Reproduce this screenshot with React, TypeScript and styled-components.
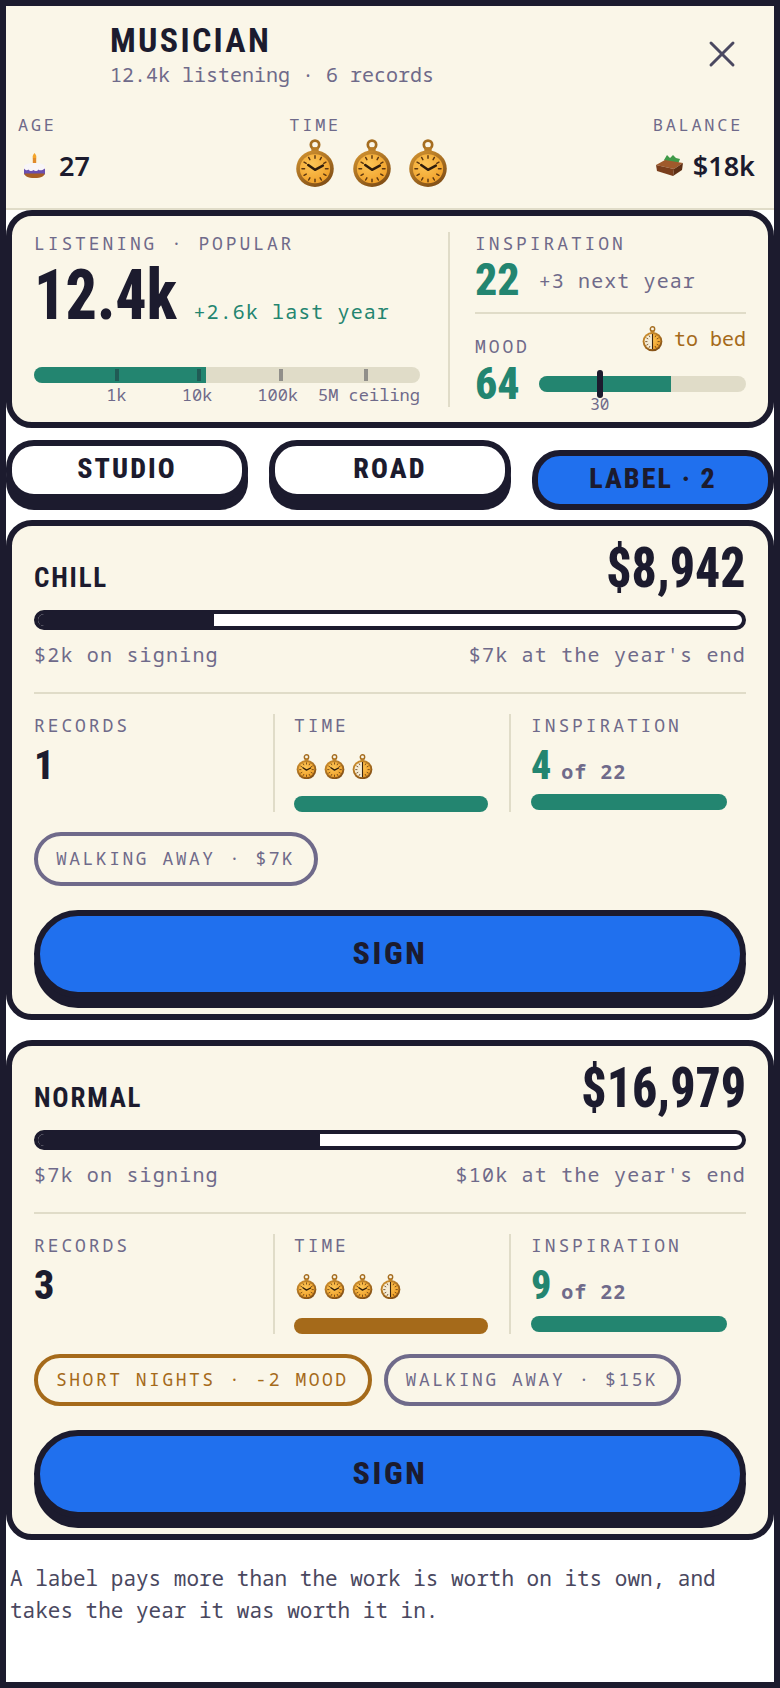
import styled, { createGlobalStyle } from 'styled-components';
import { X } from 'lucide-react';

const DARK = '#1c1b2e';
const CREAM = '#faf6e8';
const GREEN = '#238570';
const MUTED = '#6f6a8a';
const LINE = '#e0dcc8';
const AMBER = '#a56a1a';
const BLUE = '#2070ee';

const GlobalStyle = createGlobalStyle`
  html, body { margin: 0; padding: 0; background: #fff; }
  * { box-sizing: border-box; }
`;

const mono = `"Noto Sans Mono", "DejaVu Sans Mono", monospace`;
const cond = `Roboto, "Liberation Sans", sans-serif`;

const Frame = styled.div`
  width: 780px;
  height: 1688px;
  border: 6px solid ${DARK};
  background: #fff;
  display: flex;
  flex-direction: column;
  font-family: ${mono};
  color: ${DARK};
  overflow: hidden;
`;

const Header = styled.header`
  background: ${CREAM};
  height: 204px;
  flex: none;
  border-bottom: 2px solid ${LINE};
  padding: 14px 12px 0;
  display: flex;
  flex-direction: column;
`;

const TitleRow = styled.div`
  display: flex;
  justify-content: space-between;
  align-items: center;
  padding: 0 18px 0 92px;
`;

const TitleBlock = styled.div`
  display: flex;
  flex-direction: column;
  gap: 2px;
`;

const Title = styled.h1`
  margin: 0;
  font-family: ${cond};
  font-stretch: 75%;
  font-size: 34px;
  line-height: 40px;
  font-weight: 700;
  letter-spacing: 2.3px;
`;

const Sub = styled.div`
  font-size: 20px;
  line-height: 26px;
  color: ${MUTED};
`;

const CloseIcon = styled(X)`
  color: #4a4860;
  flex: none;
`;

const StatRow = styled.div`
  display: flex;
  justify-content: space-between;
  margin-top: 26px;
  padding-right: 7px;
`;

const Stat = styled.div`
  display: flex;
  flex-direction: column;
`;

const TimeStat = styled(Stat)`
  padding-right: 5px;
`;

const Label = styled.div<{ $small?: boolean }>`
  font-size: ${({ $small }) => ($small ? 17 : 18)}px;
  line-height: 22px;
  letter-spacing: ${({ $small }) => ($small ? 2.7 : 2.9)}px;
  color: ${MUTED};
`;

const StatValue = styled.div<{ $gap: number; $inset: number }>`
  display: flex;
  align-items: center;
  gap: ${({ $gap }) => $gap}px;
  padding-left: ${({ $inset }) => $inset}px;
  height: 48px;
  margin-top: 5px;
  font-family: "Noto Sans", sans-serif;
  font-weight: 600;
  font-size: 27px;
`;

const Panel = styled.section`
  flex: none;
  height: 218px;
  margin-top: 0;
  border: 6px solid ${DARK};
  border-radius: 26px;
  background: ${CREAM};
  padding: 16px 22px;
  display: grid;
  grid-template-columns: 416px 1fr;
`;

const ListenCol = styled.div`
  display: flex;
  flex-direction: column;
  border-right: 2px solid ${LINE};
  padding-right: 28px;
`;

const ListenRow = styled.div`
  display: flex;
  align-items: baseline;
  margin-top: 5px;
`;

const BigNumber = styled.div`
  font-family: ${cond};
  font-stretch: 75%;
  font-weight: 800;
  font-size: 70px;
  line-height: 72px;
  margin-right: -2px;
  transform: scaleX(0.885);
  transform-origin: left;
`;

const Delta = styled.div<{ $muted?: boolean }>`
  font-size: 20px;
  letter-spacing: 1.1px;
  color: ${({ $muted }) => ($muted ? MUTED : GREEN)};
`;

const Track = styled.div`
  position: relative;
  height: 16px;
  border-radius: 8px;
  background: ${LINE};
  overflow: hidden;
  flex: 1;
`;

const ListenTrack = styled(Track)`
  flex: none;
  margin-top: auto;
`;

const TrackFill = styled.div`
  height: 100%;
  background: ${GREEN};
`;

const Tick = styled.span`
  position: absolute;
  top: 2px;
  width: 4px;
  height: 12px;
  background: rgba(28, 27, 46, 0.4);
`;

const TickLabels = styled.div`
  display: flex;
  height: 24px;
  padding: 1px 0 0 42px;
  font-size: 17px;
  line-height: 22px;
  color: ${MUTED};
`;

const TickLabel = styled.span`
  width: 82px;
  text-align: center;
`;

const TickEnd = styled.span`
  flex: 1;
  text-align: right;
  white-space: nowrap;
`;

const VitalCol = styled.div`
  display: flex;
  flex-direction: column;
  padding: 0 0 0 25px;
`;

const InspirationBlock = styled.div`
  height: 82px;
  border-bottom: 2px solid ${LINE};
  display: flex;
  flex-direction: column;
  margin-bottom: 17px;
`;

const VitalRow = styled.div`
  display: flex;
  align-items: center;
  gap: 19px;
  margin-top: 3px;
`;

const VitalNumber = styled.div`
  font-family: ${cond};
  font-stretch: 75%;
  font-weight: 800;
  font-size: 44px;
  line-height: 46px;
  color: ${GREEN};
`;

const MoodHead = styled.div`
  display: flex;
  justify-content: space-between;
  align-items: flex-end;
  height: 26px;
`;

const ToBed = styled.div`
  display: flex;
  align-items: center;
  gap: 11px;
  font-size: 20px;
  line-height: 26px;
  color: ${AMBER};
  margin-bottom: 5px;
`;

const MoodRow = styled.div`
  display: flex;
  align-items: center;
  gap: 19px;
  margin-top: 4px;
`;

const MoodTrackWrap = styled.div`
  position: relative;
  flex: 1;
  display: flex;
`;

const MoodMarker = styled.span`
  position: absolute;
  top: -6px;
  width: 6px;
  height: 28px;
  margin-left: -3px;
  border-radius: 3px;
  background: ${DARK};
`;

const MoodMarkerLabel = styled.span`
  position: absolute;
  top: 18px;
  transform: translateX(-50%);
  font-size: 16px;
  line-height: 20px;
  color: ${MUTED};
`;

const Tabs = styled.nav`
  flex: none;
  display: grid;
  grid-template-columns: repeat(3, 242px);
  justify-content: space-between;
  margin-top: 12px;
  margin-bottom: 20px;
`;

const Tab = styled.div<{ $active?: boolean }>`
  height: 60px;
  border: 6px solid ${DARK};
  border-radius: 28px;
  display: flex;
  align-items: center;
  justify-content: center;
  padding-bottom: 4px;
  font-family: ${cond};
  font-stretch: 75%;
  font-weight: 800;
  font-size: 28px;
  letter-spacing: 2.1px;
  background: ${({ $active }) => ($active ? BLUE : '#fff')};
  box-shadow: ${({ $active }) => ($active ? 'none' : `0 10px 0 ${DARK}`)};
  transform: ${({ $active }) => ($active ? 'translateY(10px)' : 'none')};
`;

const Card = styled.section`
  flex: none;
  height: 500px;
  border: 6px solid ${DARK};
  border-radius: 26px;
  background: ${CREAM};
  padding: 12px 22px 0;
  display: flex;
  flex-direction: column;
  & + & {
    margin-top: 20px;
  }
`;

const CardHead = styled.div`
  display: flex;
  justify-content: space-between;
  align-items: baseline;
  height: 60px;
`;

const CardName = styled.div`
  font-family: ${cond};
  font-stretch: 75%;
  font-weight: 700;
  font-size: 27px;
  letter-spacing: 1.8px;
`;

const Price = styled.div`
  font-family: ${cond};
  font-stretch: 75%;
  font-weight: 800;
  font-size: 56px;
  line-height: 60px;
  transform: scaleX(0.89);
  transform-origin: right;
`;

const Split = styled.div`
  height: 20px;
  margin-top: 12px;
  border: 4px solid ${DARK};
  border-radius: 10px;
  background: #fff;
  overflow: hidden;
  flex: none;
`;

const SplitFill = styled.div`
  height: 100%;
  background: ${DARK};
`;

const SplitLabels = styled.div`
  display: flex;
  justify-content: space-between;
  margin-top: 12px;
  font-size: 20px;
  line-height: 26px;
  letter-spacing: 1.2px;
  color: ${MUTED};
`;

const Rule = styled.div`
  height: 2px;
  margin-top: 24px;
  background: ${LINE};
  flex: none;
`;

const Numbers = styled.div<{ $height: number }>`
  display: grid;
  grid-template-columns: 239px 236px 1fr;
  height: ${({ $height }) => $height}px;
  margin-top: 20px;
  flex: none;
`;

const NumberCol = styled.div<{ $first?: boolean; $lift?: number }>`
  display: flex;
  flex-direction: column;
  border-left: ${({ $first }) => ($first ? 'none' : `2px solid ${LINE}`)};
  padding: 0 21px ${({ $lift }) => $lift ?? 0}px ${({ $first }) => ($first ? 0 : 19)}px;
`;

const InspirationCol = styled(NumberCol)`
  padding-left: 20px;
  padding-right: 19px;
`;

const NumberValue = styled.div`
  display: flex;
  align-items: baseline;
  gap: 10px;
  margin-top: 8px;
  font-family: ${cond};
  font-stretch: 75%;
  font-weight: 800;
  font-size: 40px;
  line-height: 44px;
`;

const GreenDigit = styled.span`
  color: ${GREEN};
`;

const OfTotal = styled.span`
  font-family: ${mono};
  font-stretch: 100%;
  font-size: 20px;
  font-weight: 700;
  letter-spacing: 1px;
  color: ${MUTED};
`;

const WatchRow = styled.div<{ $gap: number; $inset: number }>`
  display: flex;
  align-items: center;
  gap: ${({ $gap }) => $gap}px;
  padding-left: ${({ $inset }) => $inset}px;
`;

const HeaderWatches = styled(WatchRow)`
  margin-top: 3px;
`;

const CardWatches = styled(WatchRow)`
  margin-top: 18px;
`;

const Meter = styled.div<{ $color: string }>`
  height: 16px;
  margin-top: auto;
  border-radius: 8px;
  background: ${({ $color }) => $color};
  flex: none;
`;

const Pills = styled.div`
  display: flex;
  gap: 12px;
  margin-top: 20px;
  flex: none;
`;

const Pill = styled.div<{ $color: string; $height: number }>`
  height: ${({ $height }) => $height}px;
  display: flex;
  align-items: center;
  padding: 0 19px 3px 18px;
  border: 4px solid ${({ $color }) => $color};
  border-radius: 27px;
  color: ${({ $color }) => $color};
  font-size: 18px;
  letter-spacing: 2.5px;
  white-space: nowrap;
`;

const SignButton = styled.button`
  display: block;
  flex: none;
  width: 100%;
  height: 88px;
  margin-top: 24px;
  border: 6px solid ${DARK};
  border-radius: 44px;
  background: ${BLUE};
  box-shadow: 0 10px 0 ${DARK};
  padding: 0 0 3px;
  color: ${DARK};
  font-family: ${cond};
  font-stretch: 75%;
  font-weight: 800;
  font-size: 32px;
  letter-spacing: 2.6px;
`;

const Note = styled.p`
  margin: 0;
  padding: 22px 4px 0;
  font-size: 21px;
  line-height: 32px;
  color: #4a4860;
`;

const WatchIcon = ({ size, half }: { size: number; half?: boolean }) => (
  <svg width={size} height={size * 1.2} viewBox="0 0 38 46" fill="none">
    <defs>
      <linearGradient id="watchCase" x1="0.2" y1="0" x2="0.8" y2="1">
        <stop offset="0" stopColor="#d0912f" />
        <stop offset="1" stopColor="#7c4a14" />
      </linearGradient>
      <radialGradient id="watchFace" cx="0.4" cy="0.35" r="0.8">
        <stop offset="0" stopColor="#fcc556" />
        <stop offset="1" stopColor="#ee9a22" />
      </radialGradient>
    </defs>
    <circle cx="19" cy="5.5" r="4" stroke="#a56d20" strokeWidth="2.6" />
    <rect x="15.5" y="8" width="7" height="4.5" rx="1" fill="#b87c26" />
    <ellipse cx="19" cy="28.5" rx="18" ry="17.5" fill="url(#watchCase)" />
    <ellipse cx="19" cy="28.5" rx="14.5" ry="14" fill="url(#watchFace)" />
    {half && <path d="M19 14.5a14.5 14 0 0 0 0 28z" fill="#f5ecd6" />}
    <g stroke="#5a3510" strokeWidth="1.4" strokeLinecap="round">
      <path d="M19 16v2.5M19 38.5v2.5M6.5 28.5h2.5M29 28.5h2.5M12.9 17.7l1.2 2.1M25.1 17.7l-1.2 2.1M8.5 22.2l2.1 1.2M29.5 22.2l-2.1 1.2M8.5 34.8l2.1-1.2M29.5 34.8l-2.1-1.2M12.9 39.3l1.2-2.1M25.1 39.3l-1.2-2.1" />
    </g>
    {half ? (
      <path d="M19 14.5v28" stroke="#3a2410" strokeWidth="2" />
    ) : (
      <path d="M12.5 25L19 29.5L26.5 25.5" stroke="#2f1d0c" strokeWidth="2.4" strokeLinecap="round" strokeLinejoin="round" />
    )}
  </svg>
);

const CakeIcon = () => (
  <svg width="21" height="25" viewBox="0 0 21 25">
    <path d="M10.5 0c1.8 2.2 2.2 3.6 1.6 5.5H8.9c-.6-1.9-.2-3.3 1.6-5.5z" fill="#f4a52a" />
    <rect x="8.8" y="5" width="3.4" height="6.5" fill="#e08a2c" />
    <path d="M0 14c0-2.8 4.7-4 10.5-4S21 11.2 21 14v7H0z" fill="#f8f5f8" />
    <path d="M0 15.5c1.5 1.8 3 2.4 4.5 1 1.5 2 3.5 2 5 .5 1.5 1.5 3.5 1.5 5-.5 1.5 1.500 3.5 1 6.5-1v6H0z" fill="#6a4fb0" />
    <path d="M.5 20.5h20c0 2.7-3 4.5-10 4.5s-10-1.8-10-4.5z" fill="#a85f25" />
  </svg>
);

const WalletIcon = () => (
  <svg width="27" height="22" viewBox="0 0 27 22">
    <path d="M8 6L11 1l3 3 3-3 3 3 4 1-2 5-12-2z" fill="#3f9a48" />
    <path d="M0 11l9-5 18 3-9 6z" fill="#9f5a2c" />
    <path d="M0 11l18 4-1 7-16-5z" fill="#7a3e1c" />
    <path d="M18 15l9-6-1 7-9 6z" fill="#5e2f14" />
  </svg>
);

interface Pact {
  name: string;
  price: string;
  share: number;
  signing: string;
  yearEnd: string;
  records: number;
  watches: number;
  timeColor: string;
  inspiration: number;
  numbersHeight: number;
  pillHeight: number;
  pills: { text: string; color: string }[];
}

const pacts: Pact[] = [
  {
    name: 'CHILL',
    price: '$8,942',
    share: 25,
    signing: '$2k on signing',
    yearEnd: "$7k at the year's end",
    records: 1,
    watches: 2,
    timeColor: GREEN,
    inspiration: 4,
    numbersHeight: 98,
    pillHeight: 54,
    pills: [{ text: 'WALKING AWAY · $7K', color: MUTED }],
  },
  {
    name: 'NORMAL',
    price: '$16,979',
    share: 40,
    signing: '$7k on signing',
    yearEnd: "$10k at the year's end",
    records: 3,
    watches: 3,
    timeColor: AMBER,
    inspiration: 9,
    numbersHeight: 100,
    pillHeight: 52,
    pills: [
      { text: 'SHORT NIGHTS · -2 MOOD', color: AMBER },
      { text: 'WALKING AWAY · $15K', color: MUTED },
    ],
  },
];

const ticks = [21, 42.3, 63.6, 85.4];

const PactCard = ({ pact }: { pact: Pact }) => (
  <Card>
    <CardHead>
      <CardName>{pact.name}</CardName>
      <Price>{pact.price}</Price>
    </CardHead>
    <Split>
      <SplitFill style={{ width: `${pact.share}%` }} />
    </Split>
    <SplitLabels>
      <span>{pact.signing}</span>
      <span>{pact.yearEnd}</span>
    </SplitLabels>
    <Rule />
    <Numbers $height={pact.numbersHeight}>
      <NumberCol $first>
        <Label>RECORDS</Label>
        <NumberValue>{pact.records}</NumberValue>
      </NumberCol>
      <NumberCol>
        <Label>TIME</Label>
        <CardWatches $gap={7} $inset={2}>
          {Array.from({ length: pact.watches }, (_, i) => (
            <WatchIcon key={i} size={21} />
          ))}
          <WatchIcon size={21} half />
        </CardWatches>
        <Meter $color={pact.timeColor} />
      </NumberCol>
      <InspirationCol $lift={2}>
        <Label>INSPIRATION</Label>
        <NumberValue>
          <GreenDigit>{pact.inspiration}</GreenDigit>
          <OfTotal>of 22</OfTotal>
        </NumberValue>
        <Meter $color={GREEN} />
      </InspirationCol>
    </Numbers>
    <Pills>
      {pact.pills.map((pill) => (
        <Pill key={pill.text} $color={pill.color} $height={pact.pillHeight}>
          {pill.text}
        </Pill>
      ))}
    </Pills>
    <SignButton>SIGN</SignButton>
  </Card>
);

const App = () => (
  <>
    <GlobalStyle />
    <Frame>
      <Header>
        <TitleRow>
          <TitleBlock>
            <Title>MUSICIAN</Title>
            <Sub>12.4k listening · 6 records</Sub>
          </TitleBlock>
          <CloseIcon size={44} strokeWidth={1.6} />
        </TitleRow>
        <StatRow>
          <Stat>
            <Label $small>AGE</Label>
            <StatValue $gap={14} $inset={6}>
              <CakeIcon />
              27
            </StatValue>
          </Stat>
          <TimeStat>
            <Label $small>TIME</Label>
            <HeaderWatches $gap={16.5} $inset={6}>
              <WatchIcon size={40} />
              <WatchIcon size={40} />
              <WatchIcon size={40} />
            </HeaderWatches>
          </TimeStat>
          <Stat>
            <Label $small>BALANCE</Label>
            <StatValue $gap={10} $inset={3}>
              <WalletIcon />
              $18k
            </StatValue>
          </Stat>
        </StatRow>
      </Header>

      <Panel>
        <ListenCol>
          <Label>LISTENING · POPULAR</Label>
          <ListenRow>
            <BigNumber>12.4k</BigNumber>
            <Delta>+2.6k last year</Delta>
          </ListenRow>
          <ListenTrack>
            <TrackFill style={{ width: '44.6%' }} />
            {ticks.map((left) => (
              <Tick key={left} style={{ left: `${left}%` }} />
            ))}
          </ListenTrack>
          <TickLabels>
            <TickLabel>1k</TickLabel>
            <TickLabel>10k</TickLabel>
            <TickLabel>100k</TickLabel>
            <TickEnd>5M ceiling</TickEnd>
          </TickLabels>
        </ListenCol>
        <VitalCol>
          <InspirationBlock>
            <Label>INSPIRATION</Label>
            <VitalRow>
              <VitalNumber>22</VitalNumber>
              <Delta $muted>+3 next year</Delta>
            </VitalRow>
          </InspirationBlock>
          <MoodHead>
            <Label>MOOD</Label>
            <ToBed>
              <WatchIcon size={21} half />
              to bed
            </ToBed>
          </MoodHead>
          <MoodRow>
            <VitalNumber>64</VitalNumber>
            <MoodTrackWrap>
              <Track>
                <TrackFill style={{ width: '64%' }} />
              </Track>
              <MoodMarker style={{ left: '29.5%' }} />
              <MoodMarkerLabel style={{ left: '29.5%' }}>30</MoodMarkerLabel>
            </MoodTrackWrap>
          </MoodRow>
        </VitalCol>
      </Panel>

      <Tabs>
        <Tab>STUDIO</Tab>
        <Tab>ROAD</Tab>
        <Tab $active>LABEL · 2</Tab>
      </Tabs>

      {pacts.map((pact) => (
        <PactCard key={pact.name} pact={pact} />
      ))}

      <Note>A label pays more than the work is worth on its own, and takes the year it was worth it in.</Note>
    </Frame>
  </>
);

export default App;
